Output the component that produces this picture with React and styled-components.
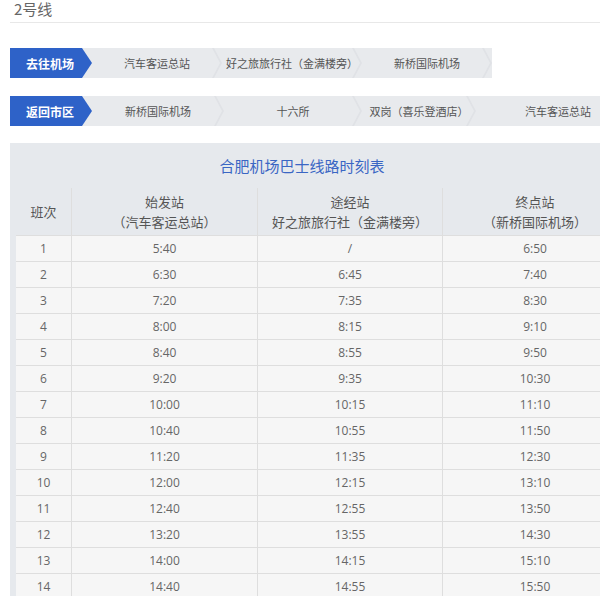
import React from "react";
import styled, { createGlobalStyle } from "styled-components";

const Global = createGlobalStyle`
  body { margin: 0; background: #fff; font-family: "Microsoft YaHei", "Noto Sans CJK SC", sans-serif; overflow: hidden; }
`;

const Page = styled.div`
  width: 600px;
  height: 596px;
  overflow: hidden;
  padding-left: 10px;
  box-sizing: border-box;
`;

const Title = styled.div`
  font-size: 15px;
  color: #666;
  height: 22px;
  line-height: 18px;
  padding-left: 4px;
  border-bottom: 1px solid #e8e8e8;
`;

const Route = styled.div`
  display: flex;
  height: 30px;
  width: ${(p) => p.width};
  background: #e8eaed;
  margin-top: ${(p) => p.top}px;
  font-size: 11px;
  color: #555;
`;

const Label = styled.div`
  flex: 0 0 82px;
  background: #2e62c8;
  color: #fff;
  font-size: 12px;
  font-weight: bold;
  display: flex;
  align-items: center;
  padding-left: 16px;
  box-sizing: border-box;
  clip-path: polygon(0 0, 72px 0, 82px 50%, 72px 100%, 0 100%);
`;

const Stop = styled.div`
  flex: 0 0 ${(p) => p.w}px;
  display: flex;
  align-items: center;
  justify-content: center;
  position: relative;
  &::after {
    content: "";
    position: absolute;
    right: 0;
    top: 0;
    width: 10px;
    height: 30px;
    background: #e0e2e6;
    clip-path: polygon(0 0, 2px 0, 10px 50%, 2px 100%, 0 100%, 8px 50%);
  }
`;

const Table = styled.div`
  margin-top: 17px;
  width: 624px;
  background: #e6e9ed;
  padding: 0 6px;
  box-sizing: border-box;
`;

const Caption = styled.div`
  height: 45px;
  line-height: 45px;
  text-align: center;
  font-size: 15px;
  color: #3a66c4;
  padding-right: 40px;
`;

const Row = styled.div`
  display: grid;
  grid-template-columns: 56px 186px 185px 185px;
  height: ${(p) => (p.head ? 48 : 26)}px;
  background: ${(p) => (p.head ? "#e6e9ed" : "#f6f6f6")};
  border-bottom: 1px solid #dedede;
  box-sizing: border-box;
  color: ${(p) => (p.head ? "#555" : "#666")};
  font-size: ${(p) => (p.head ? 13 : 12)}px;
  font-family: ${(p) => (p.head ? "inherit" : '"Open Sans", "Noto Sans CJK SC", sans-serif')};
`;

const Cell = styled.div`
  display: flex;
  flex-direction: column;
  align-items: center;
  justify-content: center;
  border-right: 1px solid #dedede;
  line-height: 20px;
`;

const data = [
  ["5:40", "/", "6:50"], ["6:30", "6:45", "7:40"], ["7:20", "7:35", "8:30"],
  ["8:00", "8:15", "9:10"], ["8:40", "8:55", "9:50"], ["9:20", "9:35", "10:30"],
  ["10:00", "10:15", "11:10"], ["10:40", "10:55", "11:50"], ["11:20", "11:35", "12:30"],
  ["12:00", "12:15", "13:10"], ["12:40", "12:55", "13:50"], ["13:20", "13:55", "14:30"],
  ["14:00", "14:15", "15:10"], ["14:40", "14:55", "15:50"],
];

export default function App() {
  return (
    <>
      <Global />
      <Page>
        <Title>2号线</Title>
        <Route top={25} width="482px">
          <Label>去往机场</Label>
          <Stop w={130}>汽车客运总站</Stop>
          <Stop w={140}>好之旅旅行社（金满楼旁）</Stop>
          <Stop w={130}>新桥国际机场</Stop>
        </Route>
        <Route top={18} width="600px">
          <Label>返回市区</Label>
          <Stop w={132}>新桥国际机场</Stop>
          <Stop w={138}>十六所</Stop>
          <Stop w={114}>双岗（喜乐登酒店）</Stop>
          <Stop w={164}>汽车客运总站</Stop>
        </Route>
        <Table>
          <Caption>合肥机场巴士线路时刻表</Caption>
          <Row head>
            <Cell>班次</Cell>
            <Cell><span>始发站</span><span>（汽车客运总站）</span></Cell>
            <Cell><span>途经站</span><span>好之旅旅行社（金满楼旁）</span></Cell>
            <Cell><span>终点站</span><span>（新桥国际机场）</span></Cell>
          </Row>
          {data.map((r, i) => (
            <Row key={i}>
              <Cell>{i + 1}</Cell>
              {r.map((v, j) => <Cell key={j}>{v}</Cell>)}
            </Row>
          ))}
        </Table>
      </Page>
    </>
  );
}
